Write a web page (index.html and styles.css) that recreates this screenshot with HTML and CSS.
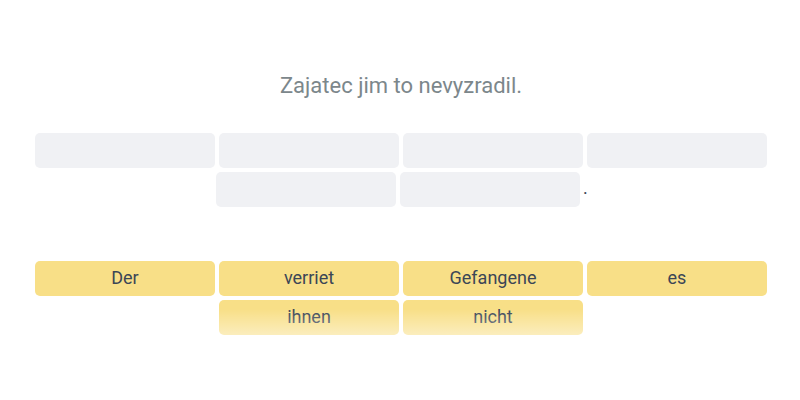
FILE: index.html
```html
<!DOCTYPE html>
<html>
<head>
<meta charset="utf-8">
<link rel="stylesheet" href="styles.css">
</head>
<body>
<main class="exercise">
  <h1 class="prompt">Zajatec jim to nevyzradil.</h1>
  <div class="slots">
    <div class="slot"></div>
    <div class="slot"></div>
    <div class="slot"></div>
    <div class="slot"></div>
    <div class="slot"></div>
    <div class="slot"></div>
    <span class="period">.</span>
  </div>
  <div class="bank">
    <div class="tile">Der</div>
    <div class="tile">verriet</div>
    <div class="tile">Gefangene</div>
    <div class="tile">es</div>
    <div class="tile">ihnen</div>
    <div class="tile">nicht</div>
  </div>
</main>
</body>
</html>
```
FILE: styles.css
```css
html, body {
  margin: 0;
  padding: 0;
  background: #ffffff;
  font-family: Roboto, "Liberation Sans", sans-serif;
}
.exercise {
  width: 732px;
  margin-left: 35px;
  padding-top: 72px;
}
.prompt {
  margin: 0;
  font-size: 22px;
  font-weight: 400;
  line-height: 28px;
  color: #7c878b;
  text-align: center;
}
.slots {
  margin-top: 33px;
  display: flex;
  flex-wrap: wrap;
  justify-content: center;
  gap: 4px;
}
.slot {
  width: 180px;
  height: 35px;
  border-radius: 5px;
  background: #f0f1f4;
}
.period {
  align-self: flex-start;
  padding-top: 3px;
  font-size: 18px;
  line-height: 26px;
  color: #3b4656;
  margin-left: -1px;
  width: 3px;
}
.bank {
  position: relative;
  margin-top: 54px;
  display: flex;
  flex-wrap: wrap;
  justify-content: center;
  gap: 4px;
}
.bank::after {
  content: "";
  position: absolute;
  left: 0;
  right: 0;
  bottom: 0;
  height: 26px;
  background: linear-gradient(to bottom, rgba(255,255,255,0), rgba(255,255,255,0.45));
}
.tile {
  width: 180px;
  height: 35px;
  border-radius: 5px;
  background: #f8df87;
  color: #3b4656;
  font-size: 18px;
  line-height: 20px;
  padding-bottom: 2px;
  box-sizing: border-box;
  display: flex;
  align-items: center;
  justify-content: center;
}
```
